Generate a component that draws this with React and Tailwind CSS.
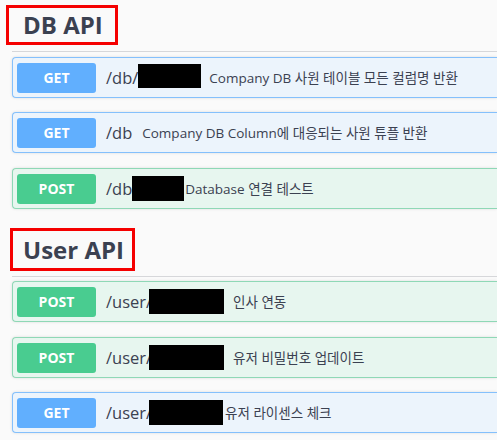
import React from "react";

const FONT = "font-['Open_Sans','Noto_Sans_CJK_KR',sans-serif]";

function Card({ method, path, redact, redactMl = "ml-0", desc, descMl, mb }) {
  const isGet = method === "GET";
  return (
    <div
      className={`flex h-[41px] items-center rounded-l-[4px] border border-r-0 pl-[4px] shadow-[0_0_3px_rgba(0,0,0,0.12)] ${
        isGet ? "border-[#84c0fc] bg-[#ecf4fc]" : "border-[#8fd8b6] bg-[#e7f6ef]"
      } ${mb}`}
    >
      <div
        className={`flex h-[30px] w-[79px] shrink-0 items-center justify-center rounded-[3px] text-[14px] font-bold text-white ${
          isGet ? "bg-[#61affe]" : "bg-[#49cc90]"
        }`}
      >
        {method}
      </div>
      <div className="ml-[10px] flex items-center whitespace-nowrap">
        <span className="text-[16.5px] leading-[20px] text-[#3b4151]">{path}</span>
        {redact ? (
          <span className={`inline-block bg-black ${redact} ${redactMl}`} />
        ) : null}
        <span className={`text-[13.5px] leading-[18px] text-[#3b4151] ${descMl}`}>{desc}</span>
      </div>
    </div>
  );
}

export default function App() {
  return (
    <div className={`flow-root h-[440px] w-full overflow-hidden bg-[#fafafa] ${FONT}`}>
      {/* DB API section */}
      <div className="pl-[12px]">
        <div className="h-[52px] border-b border-[#d6d7da] pt-[5px]">
          <div className="ml-[-6px] flex h-[40px] w-[112px] items-center border-[3px] border-[#f50000] pl-[14px]">
            <span className="text-[24px] font-bold leading-none text-[#3b4151]">DB API</span>
          </div>
        </div>
        <div className="pt-[5px]">
          <Card
            method="GET"
            path="/db/"
            redact="h-[24px] w-[63px] -mt-[3px]"
            desc="Company DB 사원 테이블 모든 컬럼명 반환"
            descMl="ml-[8px]"
            mb="mb-[14px]"
          />
          <Card
            method="GET"
            path="/db"
            desc="Company DB Column에 대응되는 사원 튜플 반환"
            descMl="ml-[10px]"
            mb="mb-[15px]"
          />
          <Card
            method="POST"
            path="/db"
            redact="h-[25px] w-[52px]"
            desc="Database 연결 테스트"
            descMl="ml-[1px]"
            mb="mb-0"
          />
        </div>
      </div>

      {/* User API section */}
      <div className="pl-[12px]">
        <div className="h-[68px] border-b border-[#d6d7da] pt-[19px]">
          <div className="ml-[-2px] flex h-[43px] w-[125px] items-center border-[3px] border-[#f50000] pl-[10px]">
            <span className="text-[24px] font-bold leading-none text-[#3b4151]">User API</span>
          </div>
        </div>
        <div className="pt-[4px]">
          <Card
            method="POST"
            path="/user/"
            redact="h-[25px] w-[75px]"
            redactMl="ml-[-3px]"
            desc="인사 연동"
            descMl="ml-[9px]"
            mb="mb-[15px]"
          />
          <Card
            method="POST"
            path="/user/"
            redact="h-[25px] w-[75px]"
            redactMl="ml-[-3px]"
            desc="유저 비밀번호 업데이트"
            descMl="ml-[9px]"
            mb="mb-[14px]"
          />
          <Card
            method="GET"
            path="/user/"
            redact="h-[25px] w-[74px]"
            redactMl="ml-[-3px]"
            desc="유저 라이센스 체크"
            descMl="ml-[2px]"
            mb="mb-0"
          />
        </div>
      </div>
    </div>
  );
}
